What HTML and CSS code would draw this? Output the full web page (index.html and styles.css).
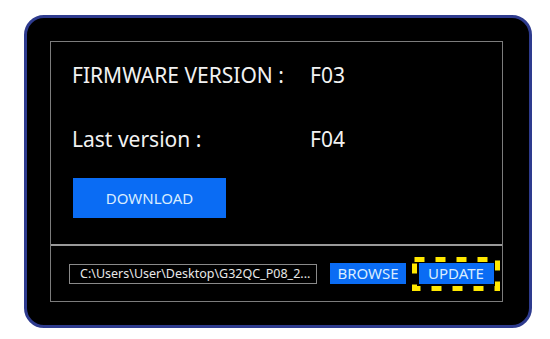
FILE: index.html
```html
<!DOCTYPE html>
<html lang="en">

<head>
    <meta charset="UTF-8">
    <meta name="viewport" content="width=device-width, initial-scale=1.0">
    <title>Firmware Update</title>
    <link rel="stylesheet" href="styles.css">
</head>

<body>
    <div class="panel">
        <div class="frame">
            <div class="info">
                <div class="rows">
                    <span class="label">FIRMWARE VERSION :</span>
                    <span class="value">F03</span>
                    <span class="label">Last version :</span>
                    <span class="value">F04</span>
                </div>
                <button class="btn download">DOWNLOAD</button>
            </div>

            <div class="actions">
                <div class="path">C:\Users\User\Desktop\G32QC_P08_2...</div>
                <button class="btn small">BROWSE</button>
                <div class="highlight">
                    <button class="btn small update">UPDATE</button>
                    <svg class="dash" width="88" height="34" viewBox="0 0 88 34">
                        <rect x="2.5" y="2.5" width="83" height="29" fill="none"
                            stroke="#ffe800" stroke-width="5" stroke-dasharray="10 11" />
                    </svg>
                </div>
            </div>
        </div>
    </div>
</body>

</html>
```

FILE: styles.css
```css
body {
    margin: 0;
    background: #fff;
    font-family: "Noto Sans", "Open Sans", sans-serif;
}

.panel {
    margin: 15px 0 0 24px;
    width: 508px;
    height: 313px;
    box-sizing: border-box;
    background: #000;
    border: 3px solid #2e3b8e;
    border-radius: 20px;
    padding: 23px 26px 23px 23px;
}

.frame {
    height: 100%;
    border: 1px solid #7c7c7c;
    box-sizing: border-box;
    display: flex;
    flex-direction: column;
}

.info {
    flex: 1;
    border-bottom: 2px solid #9a9a9a;
    padding: 18px 0 0 21px;
}

.rows {
    display: grid;
    grid-template-columns: 238px auto;
    row-gap: 34px;
    color: #f2f2f2;
    font-size: 21px;
    line-height: 30px;
}

.btn {
    border: none;
    background: #0a6cf4;
    color: #d9ecff;
    font-family: inherit;
    padding: 0;
    cursor: pointer;
}

.download {
    display: block;
    margin-top: 24px;
    margin-left: 1px;
    width: 153px;
    height: 40px;
    font-size: 15px;
}

.actions {
    height: 55px;
    display: flex;
    align-items: center;
    padding-left: 18px;
}

.path {
    width: 248px;
    height: 20px;
    box-sizing: border-box;
    border: 1px solid #8a8a8a;
    color: #e8e8e8;
    font-size: 12.5px;
    line-height: 18px;
    padding-left: 10px;
    white-space: nowrap;
    overflow: hidden;
}

.small {
    height: 21px;
    font-size: 15px;
    line-height: 21px;
}

.path + .small {
    margin-left: 13px;
    width: 76px;
}

.highlight {
    position: relative;
    margin-left: 6px;
    width: 88px;
    height: 34px;
    display: flex;
    align-items: center;
    justify-content: center;
}

.update {
    width: 75px;
}

.dash {
    position: absolute;
    left: 0;
    top: 0;
}
```
